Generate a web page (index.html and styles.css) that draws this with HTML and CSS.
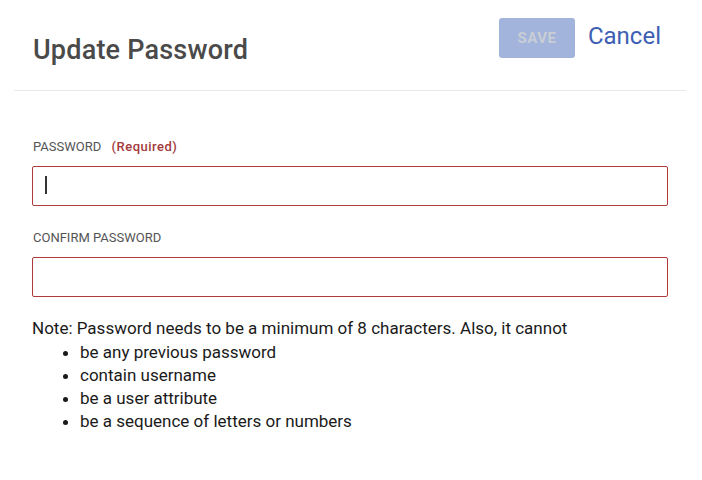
FILE: index.html
```html
<!DOCTYPE html>
<html lang="en">
<head>
    <meta charset="UTF-8">
    <meta name="viewport" content="width=device-width, initial-scale=1.0">
    <title>Update Password</title>
    <link rel="stylesheet" href="styles.css">
</head>
<body>
    <div class="dialog">
        <header class="dialog-header">
            <h1>Update Password</h1>
            <div class="actions">
                <button type="button" class="save-btn" disabled>Save</button>
                <a href="#" class="cancel-link">Cancel</a>
            </div>
        </header>
        <form class="dialog-body">
            <label for="password">Password <span class="required">(Required)</span></label>
            <div class="input-wrap">
                <input type="password" id="password">
                <span class="caret"></span>
            </div>

            <label for="confirm-password">Confirm Password</label>
            <div class="input-wrap">
                <input type="password" id="confirm-password">
            </div>

            <div class="note">
                <p>Note: Password needs to be a minimum of 8 characters. Also, it cannot</p>
                <ul>
                    <li>be any previous password</li>
                    <li>contain username</li>
                    <li>be a user attribute</li>
                    <li>be a sequence of letters or numbers</li>
                </ul>
            </div>
        </form>
    </div>
</body>
</html>
```

FILE: styles.css
```css
body {
    font-family: Roboto, "Liberation Sans", sans-serif;
    margin: 0;
    padding: 0;
    background-color: #fff;
}
.dialog {
    padding: 0 16px 0 14px;
}
.dialog-header {
    display: flex;
    justify-content: space-between;
    align-items: flex-start;
    height: 90px;
    padding: 0 25px 0 19px;
    border-bottom: 1px solid #e8e8e8;
}
.dialog-header h1 {
    margin: 34px 0 0;
    font-size: 27px;
    line-height: 32px;
    font-weight: 500;
    letter-spacing: 0.2px;
    color: #4a4a4a;
}
.actions {
    display: flex;
    align-items: flex-start;
    gap: 13px;
    margin-top: 18px;
}
.save-btn {
    width: 76px;
    height: 40px;
    background-color: #a2b4db;
    color: #c9cdd6;
    border: none;
    border-radius: 3px;
    font-family: inherit;
    font-size: 15px;
    font-weight: 700;
    letter-spacing: 0.5px;
    text-transform: uppercase;
}
.cancel-link {
    margin-top: 4px;
    font-size: 24px;
    line-height: 28px;
    color: #3d5fb3;
    text-decoration: none;
}
.dialog-body {
    display: flex;
    flex-direction: column;
    padding: 48px 18px 0 18px;
}
.dialog-body label {
    margin: 0 0 0 1px;
    font-size: 13px;
    line-height: 16px;
    color: #555;
    text-transform: uppercase;
}
.required {
    margin-left: 7px;
    color: #a23b3b;
    font-weight: 500;
    letter-spacing: 0.5px;
    text-transform: none;
}
.input-wrap {
    position: relative;
    margin: 11px 0 24px;
}
.input-wrap input {
    box-sizing: border-box;
    width: 100%;
    height: 40px;
    margin: 0;
    border: 1px solid #b03a3a;
    border-radius: 2px;
    caret-color: transparent;
    outline: none;
}
.caret {
    position: absolute;
    left: 13px;
    top: 10px;
    width: 2px;
    height: 18px;
    background-color: #333;
}
.note {
    margin-top: -4px;
    font-size: 17px;
    line-height: 23px;
    color: #1a1a1a;
}
.note p {
    margin: 0 0 1px;
}
.note ul {
    margin: 0;
    padding-left: 48px;
}
```
